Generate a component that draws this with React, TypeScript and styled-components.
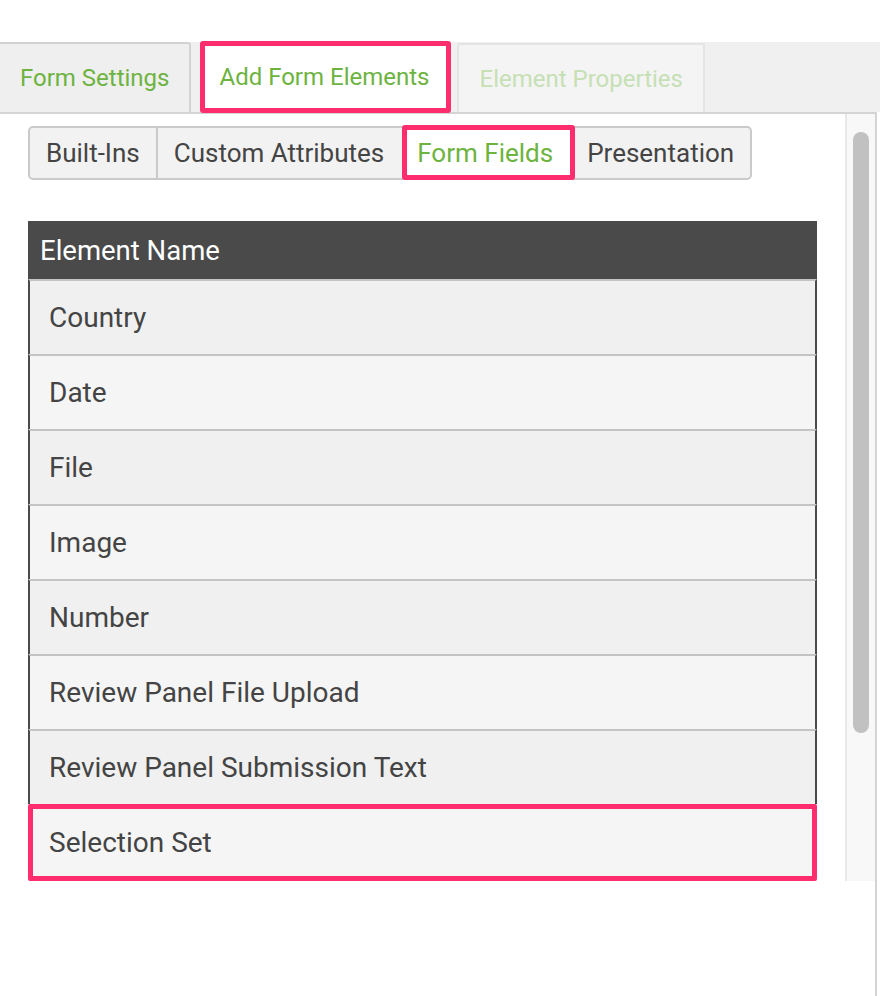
import React from "react";
import styled, { createGlobalStyle } from "styled-components";

const PINK = "#fe2d6d";
const GREEN = "#6db33f";

const Global = createGlobalStyle`
  html, body { margin: 0; padding: 0; background: #ffffff; }
  body { font-family: Roboto, "Liberation Sans", sans-serif; overflow: hidden; }
  * { box-sizing: border-box; }
`;

const Page = styled.div`
  width: 880px;
  height: 996px;
  padding-top: 42px;
  overflow: hidden;
  display: flex;
  flex-direction: column;
`;

const TabBar = styled.div`
  display: flex;
  align-items: flex-end;
  height: 70px;
  background: #f0f0f0;
  margin-left: -2px;
  gap: 8px;
`;

const Tab = styled.div<{ $variant: "normal" | "active" | "disabled" }>`
  display: flex;
  align-items: center;
  font-size: 24px;
  white-space: nowrap;
  ${({ $variant }) =>
    $variant === "active"
      ? `
    height: 72px;
    margin-bottom: -1px;
    margin-left: 1px;
    background: #ffffff;
    border: 5px solid ${PINK};
    border-radius: 3px;
    padding: 0 17px 0 14px;
    color: ${GREEN};
    position: relative;
    z-index: 2;
  `
      : $variant === "disabled"
      ? `
    height: 69px;
    margin-left: -2px;
    background: #f4f4f4;
    border: 2px solid #e4e4e4;
    border-bottom: none;
    border-radius: 3px 3px 0 0;
    padding: 0 20px;
    color: #c6e0b5;
  `
      : `
    height: 70px;
    background: #efefef;
    border: 2px solid #d2d2d2;
    border-bottom: none;
    border-radius: 3px 3px 0 0;
    padding: 0 20px;
    color: ${GREEN};
  `}
`;

const Panel = styled.div`
  flex: 1;
  margin-left: -2px;
  width: 879px;
  background: #ffffff;
  border: 2px solid #d4d4d4;
  border-bottom: none;
  display: flex;
  flex-direction: column;
`;

const ScrollArea = styled.div`
  height: 767px;
  display: flex;
  overflow: hidden;
`;

const Content = styled.div`
  flex: 1;
  padding: 12px 0 0 28px;
  display: flex;
  flex-direction: column;
  align-items: flex-start;
`;

const Track = styled.div`
  width: 30px;
  background: #f8f8f8;
  border-left: 2px solid #e8e8e8;
  padding: 18px 6px 0 6px;
`;

const Thumb = styled.div`
  height: 601px;
  background: #c1c1c1;
  border-radius: 8px;
`;

const SubTabs = styled.div`
  display: flex;
  height: 56px;
  border: 2px solid #cacaca;
  border-radius: 5px;
  background: #f2f2f2;
`;

const SubTab = styled.div<{ $active?: boolean; $first?: boolean }>`
  display: flex;
  align-items: center;
  font-size: 26px;
  white-space: nowrap;
  color: #444444;
  padding: 0 16px;
  ${({ $first }) => (!$first ? `border-left: 2px solid #cacaca;` : "")}
  ${({ $active }) =>
    $active
      ? `
    margin: -3px 0 -2px 2px;
    border: 5px solid ${PINK};
    border-radius: 3px;
    background: #ffffff;
    color: ${GREEN};
    padding: 0 17px 0 10px;
    position: relative;
    z-index: 2;
  `
      : ""}
`;

const SubTabAfter = styled(SubTab)`
  border-left: none;
  padding-left: 12px;
`;

const Table = styled.div`
  margin-top: 41px;
  width: 789px;
  display: flex;
  flex-direction: column;
`;

const HeaderRow = styled.div`
  height: 58px;
  background: #4a4a4a;
  color: #ffffff;
  font-size: 27.5px;
  font-weight: 400;
  display: flex;
  align-items: center;
  padding-left: 12px;
`;

const Row = styled.div<{ $alt: boolean; $selected?: boolean }>`
  display: flex;
  align-items: center;
  font-size: 28px;
  color: #444444;
  background: ${({ $alt }) => ($alt ? "#f5f5f5" : "#f0f0f0")};
  ${({ $selected }) =>
    $selected
      ? `
    height: 77px;
    border: 5px solid ${PINK};
    border-radius: 2px;
    padding-left: 16px;
  `
      : `
    height: 75px;
    border-left: 2px solid #4a4a4a;
    border-right: 2px solid #4a4a4a;
    border-top: 2px solid #c4c4c4;
    padding-left: 19px;
  `}
`;

const rows = [
  "Country",
  "Date",
  "File",
  "Image",
  "Number",
  "Review Panel File Upload",
  "Review Panel Submission Text",
  "Selection Set",
];

export default function App() {
  return (
    <>
      <Global />
      <Page>
        <TabBar>
          <Tab $variant="normal">Form Settings</Tab>
          <Tab $variant="active">Add Form Elements</Tab>
          <Tab $variant="disabled">Element Properties</Tab>
        </TabBar>
        <Panel>
          <ScrollArea>
            <Content>
              <SubTabs>
                <SubTab $first>Built-Ins</SubTab>
                <SubTab>Custom Attributes</SubTab>
                <SubTab $active>Form Fields</SubTab>
                <SubTabAfter>Presentation</SubTabAfter>
              </SubTabs>
              <Table>
                <HeaderRow>Element Name</HeaderRow>
                {rows.map((r, i) => (
                  <Row key={r} $alt={i % 2 === 1} $selected={r === "Selection Set"}>
                    {r}
                  </Row>
                ))}
              </Table>
            </Content>
            <Track>
              <Thumb />
            </Track>
          </ScrollArea>
        </Panel>
      </Page>
    </>
  );
}
